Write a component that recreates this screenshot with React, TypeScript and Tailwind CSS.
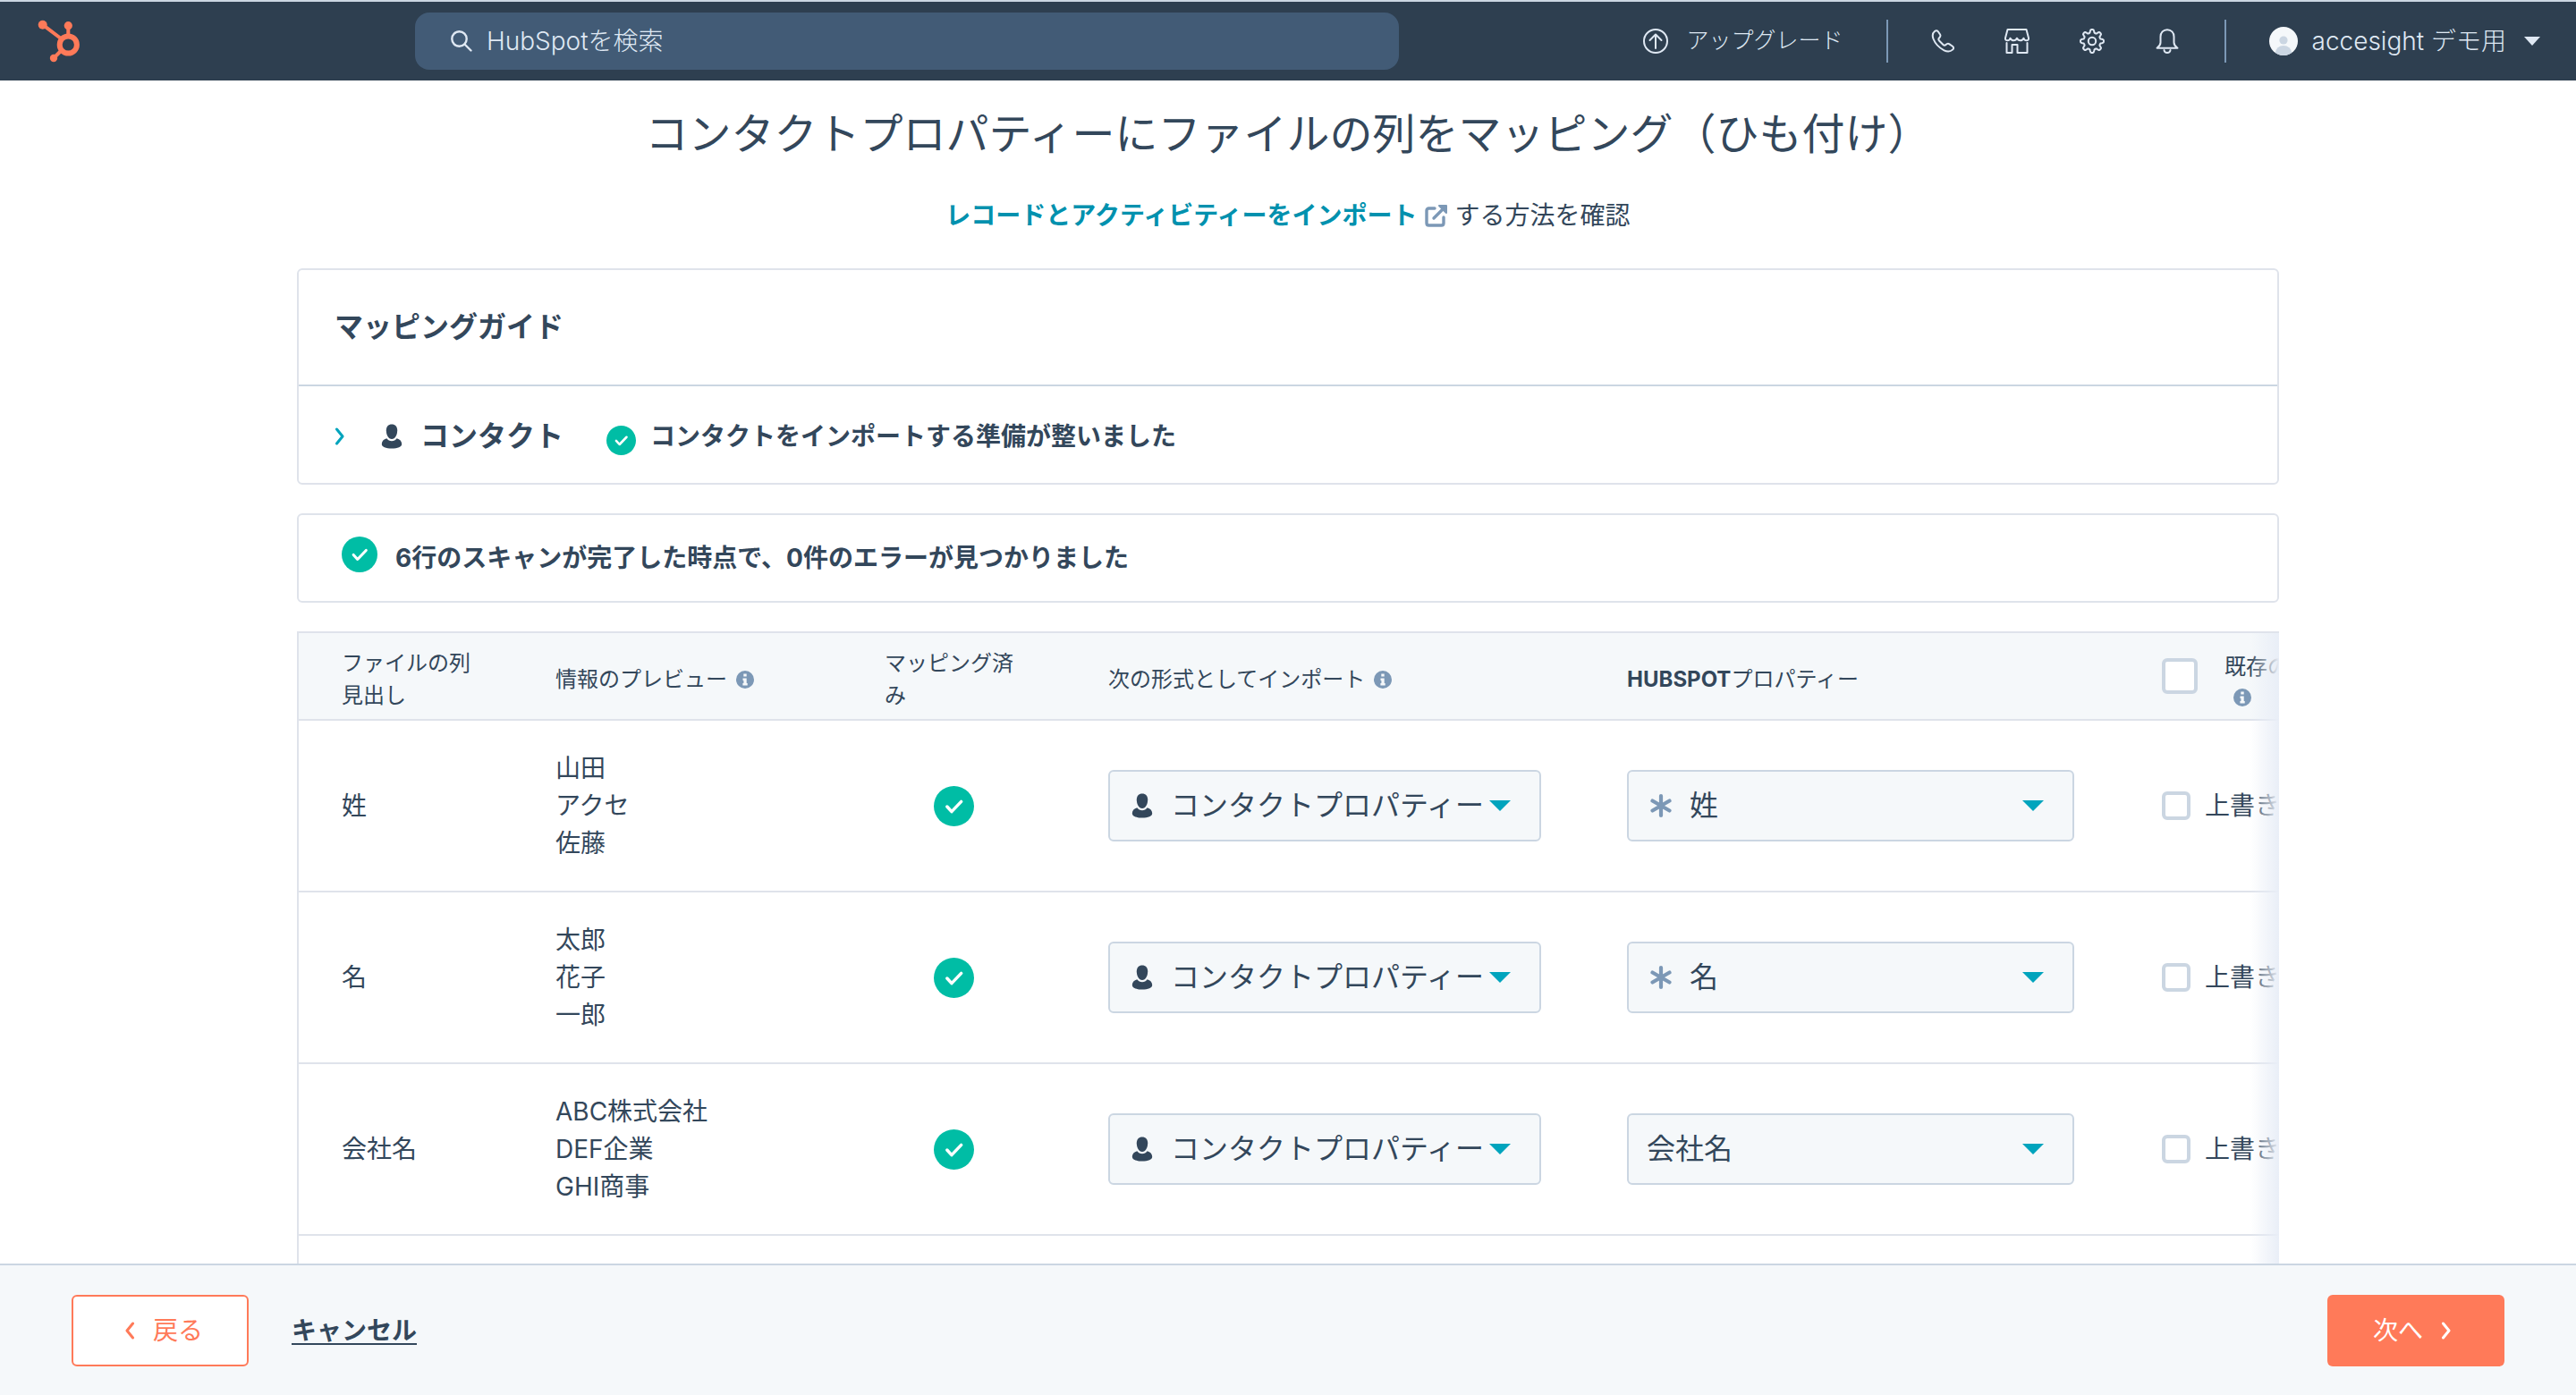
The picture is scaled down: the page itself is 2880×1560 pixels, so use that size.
import { ReactNode, useState } from 'react'

interface MappingRow {
  id: string
  column: string
  preview: string[]
  property: string
  unique: boolean
}

const rows: MappingRow[] = [
  { id: 'lastname', column: '姓', preview: ['山田', 'アクセ', '佐藤'], property: '姓', unique: true },
  { id: 'firstname', column: '名', preview: ['太郎', '花子', '一郎'], property: '名', unique: true },
  { id: 'company', column: '会社名', preview: ['ABC株式会社', 'DEF企業', 'GHI商事'], property: '会社名', unique: false },
]

// 歯車の輪郭（歯は8枚）
const gearPath = Array.from({ length: 96 }, (_, i) => {
  const t = (i / 96) * Math.PI * 2
  const r = 11.2 + 1.8 * Math.tanh(2.2 * Math.cos(8 * t))
  return `${i === 0 ? 'M' : 'L'}${(14 + r * Math.sin(t)).toFixed(2)} ${(14 - r * Math.cos(t)).toFixed(2)}`
}).join('') + 'Z'

function Logo() {
  return (
    <svg viewBox="0 0 48 48" className="size-12" fill="none" stroke="#ff7a59">
      <path d="M5.7 5.7L26 21M34.3 7v12M18 43l8-8" strokeWidth="4" />
      <circle cx="34.3" cy="28" r="9.6" strokeWidth="6" />
      <circle cx="5.7" cy="5.7" r="5" fill="#ff7a59" stroke="none" />
      <circle cx="34.3" cy="6.7" r="4.6" fill="#ff7a59" stroke="none" />
      <circle cx="18" cy="43" r="4.2" fill="#ff7a59" stroke="none" />
    </svg>
  )
}

function NavIcon({ children }: { children: ReactNode }) {
  return (
    <svg viewBox="0 0 28 28" className="size-7 shrink-0" fill="none" stroke="currentColor" strokeWidth="2" strokeLinecap="round" strokeLinejoin="round">
      {children}
    </svg>
  )
}

function SuccessIcon({ className }: { className: string }) {
  return (
    <svg viewBox="0 0 44 44" className={`shrink-0 ${className}`} fill="none">
      <circle cx="22" cy="22" r="22" fill="#00bda5" />
      <path d="M14.5 22.5l5 5.5L30 17" stroke="#fff" strokeWidth="3.4" strokeLinecap="round" strokeLinejoin="round" />
    </svg>
  )
}

function InfoIcon() {
  return (
    <svg viewBox="0 0 20 20" className="size-5 shrink-0">
      <circle cx="10" cy="10" r="10" fill="#7c98b6" />
      <path d="M8.3 3.6h3.4v3H8.3zM7.5 8.6h4.2v5.4h1v2.4H7.4V14h1v-3h-.9z" fill="#f5f8fa" />
    </svg>
  )
}

function PersonIcon({ className }: { className: string }) {
  return (
    <svg viewBox="0 0 24 28" className={`h-7 w-6 ${className}`} fill="#33475b">
      <path d="M12 .5c3.8 0 6.2 2.6 6.2 6.7 0 5-2.4 9.8-6.2 9.8S5.8 12.2 5.8 7.2C5.8 3.1 8.2.5 12 .5z" />
      <path d="M6.3 16.2c1.4 2 3.4 3 5.7 3s4.3-1 5.7-3c3.3 1 5.5 3.2 5.5 6.3 0 3.4-4.600 5-11.200 5S.8 25.900.8 22.500c0-3.100 2.200-5.300 5.500-6.300z" />
    </svg>
  )
}

function AsteriskIcon({ className }: { className: string }) {
  return (
    <svg viewBox="0 0 24 28" className={`h-7 w-6 ${className}`} stroke="#7c98b6" strokeWidth="4.2" strokeLinecap="round">
      <path d="M12 3v22M2.5 8.5l19 11M21.5 8.5l-19 11" />
    </svg>
  )
}

function Chevron({ flip }: { flip?: boolean }) {
  return (
    <svg viewBox="0 0 12 20" className="h-5 w-3" fill="none" stroke="currentColor" strokeWidth="3" strokeLinecap="round" strokeLinejoin="round">
      <path d={flip ? 'M9.5 2L3 10l6.5 8' : 'M2.5 2L9 10l-6.5 8'} />
    </svg>
  )
}

function SelectBox({ label, value, icon }: { label: string; value: string; icon?: ReactNode }) {
  return (
    <div className="relative">
      <select
        aria-label={label}
        defaultValue={value}
        className={`block h-20 w-full appearance-none rounded-md border-2 border-[#cbd6e2] bg-[#f5f8fa] text-[32px] text-[#33475b] ${icon ? 'pl-[68px]' : 'pl-5'}`}
      >
        <option>{value}</option>
      </select>
      {icon}
      <svg viewBox="0 0 24 12" className="pointer-events-none absolute right-[34px] top-[34px] h-3 w-6">
        <path d="M0 0h24L12 12z" fill="#00a4bd" />
      </svg>
    </div>
  )
}

function TopBar() {
  return (
    <header className="flex h-[90px] shrink-0 items-center border-t-2 border-[#cbd6e2] bg-[#2e3f50] pl-[42px] pr-10 text-[#dfe8f3]">
      <a href="#home" aria-label="HubSpot" className="w-[422px] shrink-0"><Logo /></a>
      <label className="flex h-16 max-w-[1100px] flex-1 items-center gap-4 rounded-2xl bg-[#425b76] px-10">
        <svg viewBox="0 0 24 24" className="size-6 shrink-0" fill="none" stroke="currentColor" strokeWidth="2.4" strokeLinecap="round">
          <circle cx="9.5" cy="9.5" r="8.2" />
          <path d="M15.5 15.5l7 7" />
        </svg>
        <input type="search" aria-label="検索" placeholder="HubSpotを検索" className="min-w-0 flex-1 bg-transparent text-[28px] font-light outline-none placeholder:text-[#dfe8f3]" />
      </label>
      <nav className="ml-auto flex items-center">
        <button className="flex items-center gap-5 text-[25px] font-light">
          <NavIcon>
            <circle cx="14" cy="14" r="13" />
            <path d="M14 22V7M7.5 13L14 6.5l6.5 6.5" />
          </NavIcon>
          アップグレード
        </button>
        <div className="ml-12 h-12 w-0.5 bg-[#7c98b6]" />
        <div className="ml-[46px] mr-[50px] flex gap-14">
          <button aria-label="通話">
            <NavIcon>
              <path d="M6 3C7.5 1.8 9 2 10 3.5L12 6.5C13 8 12.5 9 11 10.5C10 11.5 10.2 12.5 11 13.5L15.5 18C16.5 19 17.5 19 18.5 18C20 16.5 21 16.3 22.5 17.3L26 19.7C27.5 21 27.4 22.3 26.2 23.4C23.5 26 20.5 26.3 16.5 24.3C11.5 21.7 6.5 16.5 4.5 11.5C3 7.5 3.5 5 6 3Z" />
            </NavIcon>
          </button>
          <button aria-label="マーケットプレイス">
            <NavIcon>
              <path d="M3.5 1h21L27 10.5c.3 1.800-.8 2.800-2.300 2.800s-2.700-1-3.200-2.600c-.8 1.600-2 2.600-3.700 2.600S14.600 12.300 14 10.700c-.6 1.600-2 2.600-3.700 2.600S7.300 12.300 6.500 10.700C6 12.300 4.800 13.300 3.300 13.300S.7 12.300 1 10.500z" />
              <path d="M2.5 16v11h6v-9h6v9h11V16" />
            </NavIcon>
          </button>
          <button aria-label="設定">
            <NavIcon>
              <path d={gearPath} />
              <circle cx="14" cy="14" r="4.2" />
            </NavIcon>
          </button>
          <button aria-label="通知">
            <NavIcon>
              <path d="M14 1.2C9.5 1.2 6.5 4.5 6.5 9v6.5c0 2.6-1.2 4.2-4 6.2h23c-2.8-2-4-3.6-4-6.2V9C21.5 4.5 18.5 1.2 14 1.2z" />
              <path d="M10.5 24a3.5 3 0 0 0 7 0" />
            </NavIcon>
          </button>
        </div>
        <div className="h-12 w-0.5 bg-[#7c98b6]" />
        <button className="ml-12 flex items-center gap-4 text-[28px] font-light">
          <svg viewBox="0 0 32 32" className="size-8 shrink-0">
            <clipPath id="avatar"><circle cx="16" cy="16" r="16" /></clipPath>
            <circle cx="16" cy="16" r="16" fill="#f5f8fa" />
            <g clipPath="url(#avatar)" fill="#cbd6e2">
              <circle cx="16" cy="15" r="4.6" />
              <ellipse cx="16" cy="29" rx="9" ry="8" />
            </g>
          </svg>
          accesight デモ用
          <svg viewBox="0 0 18 10" className="ml-1 h-[10px] w-[18px]" fill="currentColor">
            <path d="M0 0h18L9 10z" />
          </svg>
        </button>
      </nav>
    </header>
  )
}

function MappingTable() {
  const [overwrite, setOverwrite] = useState<string[]>([])
  const allChecked = overwrite.length === rows.length

  const toggle = (id: string) => {
    setOverwrite(prev => (prev.includes(id) ? prev.filter(x => x !== id) : [...prev, id]))
  }

  const box = 'shrink-0 appearance-none rounded-md border-4 border-[#cbd6e2] bg-white checked:bg-[#00a4bd]'

  return (
    <div className="relative mt-8 flex-1 overflow-hidden border-l-2 border-t-2 border-[#dfe3eb]">
      <table className="w-full table-fixed border-separate border-spacing-0 text-left">
        <colgroup>
          <col className="w-[239px]" />
          <col className="w-[368px]" />
          <col className="w-[250px]" />
          <col className="w-[580px]" />
          <col className="w-[598px]" />
          <col />
        </colgroup>
        <thead className="bg-[#f5f8fa] text-[24px] leading-9 [&_th]:h-[98px] [&_th]:border-b-2 [&_th]:border-[#dfe3eb] [&_th]:pl-12 [&_th]:pt-2 [&_th]:font-normal">
          <tr>
            <th className="pr-10">ファイルの列見出し</th>
            <th><span className="flex items-center gap-[10px]">情報のプレビュー<InfoIcon /></span></th>
            <th className="pr-14">マッピング済み</th>
            <th><span className="flex items-center gap-[10px]">次の形式としてインポート<InfoIcon /></span></th>
            <th><span className="font-bold">HUBSPOT</span>プロパティー</th>
            <th>
              <label className="flex items-start gap-[30px] whitespace-nowrap">
                <input
                  type="checkbox"
                  checked={allChecked}
                  onChange={() => setOverwrite(allChecked ? [] : rows.map(r => r.id))}
                  className={`mt-3 size-10 ${box}`}
                />
                <span className="flex flex-col pt-1">
                  既存の
                  <span className="flex h-8 items-center pl-[10px]"><InfoIcon /></span>
                </span>
              </label>
            </th>
          </tr>
        </thead>
        <tbody className="text-[28px] leading-[42px] [&_td]:h-48 [&_td]:border-b-2 [&_td]:border-[#dfe3eb] [&_td]:pl-12">
          {rows.map(row => (
            <tr key={row.id}>
              <td>{row.column}</td>
              <td>{row.preview.map(name => <div key={name}>{name}</div>)}</td>
              <td className="pr-12"><SuccessIcon className="mx-auto size-[45px]" /></td>
              <td className="pr-12">
                <SelectBox
                  label={`${row.column}のインポート形式`}
                  value="コンタクトプロパティー"
                  icon={<PersonIcon className="pointer-events-none absolute left-[26px] top-[26px]" />}
                />
              </td>
              <td className="pr-[50px]">
                <SelectBox
                  label={`${row.column}のプロパティー`}
                  value={row.property}
                  icon={row.unique ? <AsteriskIcon className="pointer-events-none absolute left-[26px] top-[26px]" /> : undefined}
                />
              </td>
              <td>
                <label className="flex items-center gap-4 whitespace-nowrap">
                  <input type="checkbox" checked={overwrite.includes(row.id)} onChange={() => toggle(row.id)} className={`size-8 ${box}`} />
                  上書き
                </label>
              </td>
            </tr>
          ))}
        </tbody>
      </table>
      {/* 横スクロールできることを示す影 */}
      <div className="pointer-events-none absolute inset-y-0 right-0 w-8 bg-linear-to-r from-transparent to-[#e9eef7]" />
    </div>
  )
}

export default function App() {
  return (
    <div className="flex h-screen flex-col overflow-hidden bg-white font-['Inter','Noto_Sans_CJK_JP',sans-serif] text-[#33475b]">
      <TopBar />
      <main className="flex min-h-0 flex-1 flex-col overflow-hidden px-83">
        <h1 className="mt-6 text-center text-[48px] leading-[72px]">コンタクトプロパティーにファイルの列をマッピング（ひも付け）</h1>
        <p className="mt-[34px] flex items-center justify-center text-[28px] leading-[42px]">
          <a href="#import-guide" className="flex items-center gap-2 font-bold text-[#0091ae]">
            レコードとアクティビティーをインポート
            <svg viewBox="0 0 26 26" className="size-[26px]" fill="none" stroke="#7c98b6" strokeWidth="3.4" strokeLinecap="round" strokeLinejoin="round">
              <path d="M11 5H4.5C3 5 2 6 2 7.5v14C2 23 3 24 4.5 24h14c1.5 0 2.5-1 2.5-2.5V15" />
              <path d="M10 16L21 5" />
              <path d="M16 2h8v8z" fill="#7c98b6" strokeWidth="2" />
            </svg>
          </a>
          <span className="ml-2">する方法を確認</span>
        </p>

        <section className="mt-[38px] shrink-0 rounded-md border-2 border-[#dfe3eb]">
          <h2 className="flex h-[130px] items-center border-b-2 border-[#cbd6e2] px-10 text-[32px] font-bold">マッピングガイド</h2>
          <div className="flex h-[108px] items-center px-10 pt-1">
            <button className="flex items-center text-[32px] font-bold">
              <span className="text-[#00a4bd]"><Chevron /></span>
              <PersonIcon className="ml-10" />
              <span className="ml-5">コンタクト</span>
            </button>
            <SuccessIcon className="ml-12 mt-2 size-[33px]" />
            <span className="ml-4 text-[28px] font-bold">コンタクトをインポートする準備が整いました</span>
          </div>
        </section>

        <section className="mt-8 flex h-[100px] shrink-0 items-center rounded-md border-2 border-[#dfe3eb] px-12">
          <SuccessIcon className="mb-2 size-10" />
          <span className="ml-5 text-[28px] font-bold">6行のスキャンが完了した時点で、0件のエラーが見つかりました</span>
        </section>

        <MappingTable />
      </main>

      <footer className="flex h-[147px] shrink-0 items-center border-t-2 border-[#cbd6e2] bg-[#f5f8fa] px-20 text-[28px]">
        <button className="flex h-20 w-[198px] items-center justify-center gap-5 rounded-md border-2 border-[#ff7a59] bg-white pl-2 text-[#ff7a59]">
          <Chevron flip />
          戻る
        </button>
        <a href="#cancel" className="ml-12 font-bold underline decoration-2 underline-offset-4">キャンセル</a>
        <button className="ml-auto flex h-20 w-[198px] items-center justify-center gap-5 rounded-md bg-[#ff7a59] pr-2 text-white">
          次へ
          <Chevron />
        </button>
      </footer>
    </div>
  )
}
